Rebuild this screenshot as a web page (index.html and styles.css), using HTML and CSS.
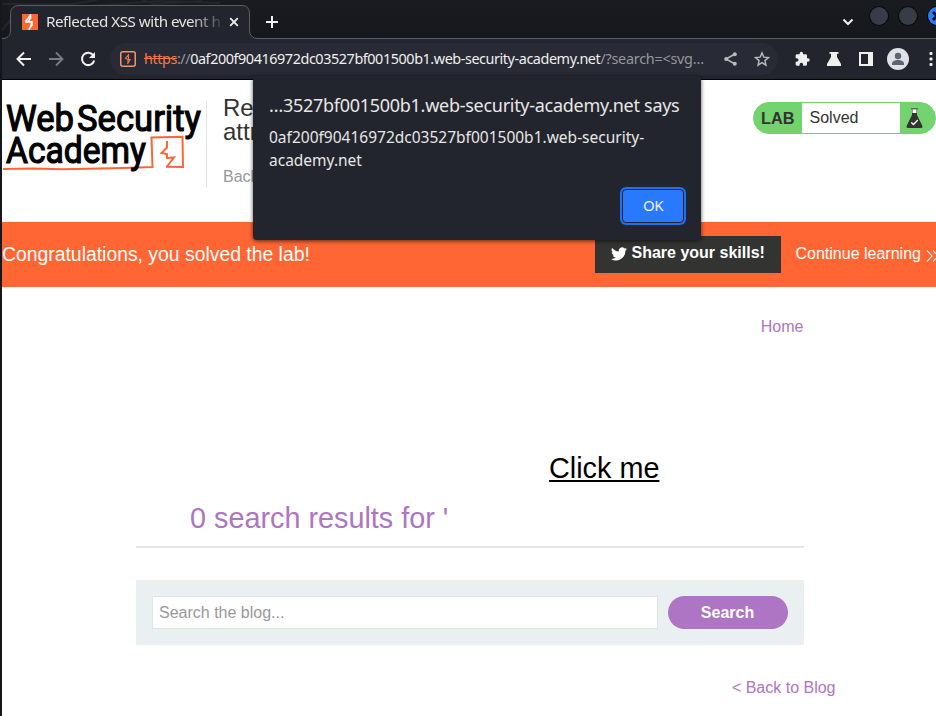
FILE: index.html
```html
<!DOCTYPE html>
<html lang="en">
<head>
<meta charset="utf-8">
<title>Reflected XSS with event handlers and href attributes blocked</title>
<link rel="stylesheet" href="styles.css">
</head>
<body>
<div class="window">
  <div class="tabstrip">
    <svg class="wallpaper" width="300" height="39" viewBox="0 0 300 39"><path d="M0 4h70L95 0M0 30l12-14M88 6l70-5 60 2M140 0l12 4 48-3" fill="none" stroke="#24262c" stroke-width="2"/></svg>
    <div class="tab">
      <svg class="tab-edge" width="258" height="34" viewBox="0 0 258 34"><path d="M0 34C5 34 8.500 31 8.500 26V9Q8.500 .5 17 .5H240Q247.500 .5 247.500 9V25Q247.500 33.500 256 33.500h2V34z" fill="#23252e"/><path d="M0 33.500C5 33.500 8.500 31 8.500 26V9Q8.500 .5 17 .5H240Q247.500 .5 247.500 9V25Q247.500 33.500 256 33.500h2" fill="none" stroke="#5b5d63"/></svg>
      <svg class="favicon" width="16" height="16" viewBox="0 0 16 16"><rect width="16" height="16" fill="#ff6633"/><path d="M8.500 0v4L6 8h3.500v2L7 16M8.500 1L4 7v1h5M10 7v4l-3 4" fill="none" stroke="#fff" stroke-width="1.600"/></svg>
      <span class="tab-title">Reflected XSS with event h</span>
      <svg class="tab-close" width="10" height="10" viewBox="0 0 10 10"><path d="M1.200 1.200l7.600 7.600M8.800 1.200L1.200 8.800" stroke="#f1f1ef" stroke-width="1.800"/></svg>
    </div>
    <svg class="new-tab" width="12" height="12" viewBox="0 0 12 12"><path d="M6 0v12M0 6h12" stroke="#f1f1ef" stroke-width="2"/></svg>
    <div class="window-controls">
      <svg class="chevron" width="12" height="8" viewBox="0 0 12 8"><path d="M1.500 1.500L6 6l4.500-4.500" fill="none" stroke="#f1f1ef" stroke-width="2"/></svg>
      <i class="dot"></i><i class="dot"></i>
      <i class="dot dot-close"><svg width="18" height="18" viewBox="0 0 18 18"><path d="M5 5l8 8M13 5l-8 8" stroke="#111" stroke-width="3"/></svg></i>
    </div>
  </div>
  <div class="toolbar">
    <svg class="nav" width="16" height="16" viewBox="0 0 16 16"><path d="M15 8H2M8 1.500L1.500 8 8 14.500" fill="none" stroke="#f1f1ef" stroke-width="2"/></svg>
    <svg class="nav" width="16" height="16" viewBox="0 0 16 16"><path d="M1 8h13M8 1.500L14.500 8 8 14.500" fill="none" stroke="#7b7c80" stroke-width="1.800"/></svg>
    <svg class="nav" width="16" height="16" viewBox="0 0 16 16"><path d="M13.400 4.500A6.200 6.200 0 1 0 14.200 9.500" fill="none" stroke="#f1f1ef" stroke-width="2"/><path d="M15 1v6H9z" fill="#f1f1ef"/></svg>
    <div class="omnibox">
      <svg class="site-icon" width="16" height="16" viewBox="0 0 16 16"><rect x=".75" y=".75" width="14.500" height="14.500" rx="2" fill="none" stroke="#f49468" stroke-width="1.500"/><path d="M9 3L5.500 7.500 8 8.500H10L7.500 13M8.500 4v4M8 8v4" fill="none" stroke="#f4774b" stroke-width="1.200"/></svg>
      <span class="url"><span class="url-scheme">https</span><span class="url-dim">://</span><span class="url-host">0af200f90416972dc03527bf001500b1.web-security-academy.net</span><span class="url-dim url-path">/?search=&lt;svg…</span></span>
      <svg class="share" width="13" height="14" viewBox="0 0 13 14"><path d="M11 2L2 7l9 5" fill="none" stroke="#b9babb" stroke-width="1.500"/><g fill="#b9babb"><circle cx="10.800" cy="2.200" r="2"/><circle cx="2.200" cy="7" r="2"/><circle cx="10.800" cy="11.800" r="2"/></g></svg>
      <svg class="star" width="16" height="16" viewBox="0 0 16 16"><path d="M8 1.800l1.800 4.300 4.700.4-3.600 3.100 1.100 4.600-4-2.500-4 2.500 1.100-4.600-3.600-3.100 4.700-.4z" fill="none" stroke="#b9babb" stroke-width="1.400"/></svg>
    </div>
    <svg class="ext" width="16" height="16" viewBox="0 0 24 24"><path d="M21 11h-1.500V7c0-1.100-.9-2-2-2h-4V3.500a2.500 2.500 0 0 0-5 0V5h-4c-1.100 0-2 .9-2 2v3.800H4a2.700 2.700 0 0 1 0 5.400H2.500V20c0 1.100.9 2 2 2h3.800v-1.500a2.700 2.700 0 0 1 5.400 0V22h3.800c1.100 0 2-.9 2-2v-4H21a2.500 2.500 0 0 0 0-5z" fill="#efefed"/></svg>
    <svg class="flask" width="16" height="14" viewBox="0 0 16 14"><path d="M3.500 0h9v1.700H11V5l4 7v2H1v-2l4-7V1.700H3.500z" fill="#efefed"/></svg>
    <svg class="panel" width="14" height="14" viewBox="0 0 14 14"><path d="M0 0h14v14H0zM2 2v10h7V2z" fill="#efefed" fill-rule="evenodd"/></svg>
    <svg class="avatar" width="22" height="22" viewBox="0 0 22 22"><circle cx="11" cy="11" r="11" fill="#dee1e6"/><circle cx="11" cy="8" r="3.200" fill="#5b6377"/><path d="M5 17v-1.500c0-2 3-3.500 6-3.500s6 1.500 6 3.500V17z" fill="#5b6377"/></svg>
    <svg class="kebab" width="4" height="14" viewBox="0 0 4 14"><g fill="#efefed"><rect x=".5" width="3" height="3" rx="1"/><rect x=".5" y="5.500" width="3" height="3" rx="1"/><rect x=".5" y="11" width="3" height="3" rx="1"/></g></svg>
  </div>

  <div class="page">
    <header class="lab-header">
      <svg class="logo" width="204" height="84" viewBox="0 0 204 84">
        <path d="M1 75l30-.5 30 .8 60-1.200 29.500-1.100L149.500 43.500l31-.8.5 30.300-17-.3" fill="none" stroke="#ff6633" stroke-width="2"/>
        <path d="M165 47v6.500l-5.500 5.500 5.500 1v4l7-.5-7 9" fill="none" stroke="#ff6633" stroke-width="2"/>
        <g class="logo-text"><text x="4" y="36.500" textLength="68" lengthAdjust="spacingAndGlyphs">Web</text><text x="75" y="36.500" textLength="124" lengthAdjust="spacingAndGlyphs">Security</text><text x="4" y="69" textLength="140" lengthAdjust="spacingAndGlyphs">Academy</text></g>
      </svg>
      <div class="lab-title">
        <h2>Reflected XSS with event handlers and href<br>attributes blocked</h2>
        <a class="lab-back">Back to lab description</a>
      </div>
      <div class="lab-status">
        <b>LAB</b><span>Solved</span>
        <svg width="17" height="20" viewBox="0 0 17 20"><path d="M6 1h5v6l5.200 10.500Q17 20 15 20H2Q0 20 .8 17.500L6 7z" fill="#333332"/><path d="M6.500 1h4v4h-4z" fill="#fff"/><path d="M5 .7h7" stroke="#666" stroke-width="1.400"/><path d="M5.300 14.500l2.200 2 4.300-4.500" fill="none" stroke="#fff" stroke-width="1.400"/></svg>
      </div>
    </header>
    <section class="banner">
      <p>Congratulations, you solved the lab!</p>
      <a class="share-skills"><svg width="16" height="14" viewBox="0 0 24 20"><path d="M24 2.400c-.9.400-1.800.7-2.800.8A5 5 0 0 0 23.300.5c-1 .6-2 1-3.100 1.200a4.900 4.900 0 0 0-8.400 4.500C7.700 6 4.100 4 1.700 1a4.900 4.900 0 0 0 1.500 6.600c-.8 0-1.500-.2-2.200-.6 0 2.300 1.500 4.400 3.900 4.900-.7.200-1.500.2-2.200.1.600 2 2.400 3.400 4.600 3.400A9.900 9.900 0 0 1 0 17.400 14 14 0 0 0 21.500 5c1-.7 1.800-1.600 2.500-2.600z" fill="#fff"/></svg><span>Share your skills!</span></a>
      <a class="continue"><span>Continue learning</span><svg width="14" height="12" viewBox="0 0 14 12"><path d="M1 .5L6 6l-5 5.500M7 .5L12 6l-5 5.500" fill="none" stroke="#fff" stroke-width="1.100"/></svg></a>
    </section>
    <main class="content">
      <nav><a>Home</a></nav>
      <div class="click"><a>Click me</a></div>
      <h1>0 search results for '</h1>
      <form class="search"><input type="text" placeholder="Search the blog..."><button type="button">Search</button></form>
      <div class="back"><a>&lt; Back to Blog</a></div>
    </main>
  </div>

  <div class="dialog">
    <div class="dialog-title">…3527bf001500b1.web-security-academy.net says</div>
    <p>0af200f90416972dc03527bf001500b1.web-security-<br>academy.net</p>
    <button type="button">OK</button>
  </div>
</div>
</body>
</html>
```

FILE: styles.css
```css
* { box-sizing: border-box; }
body { margin: 0; background: #16171c; overflow: hidden; }
svg { display: block; flex: none; }
.window { position: relative; width: 936px; height: 716px; padding-left: 2px; overflow: hidden; display: flex; flex-direction: column; font-family: "Noto Sans", sans-serif; }

.tabstrip { position: relative; flex: none; height: 39px; display: flex; align-items: flex-end; background: linear-gradient(#1a1b20, #17181d); border-bottom: 1px solid #5b5d63; }
.wallpaper { position: absolute; left: 0; top: 0; }
.tab { position: relative; width: 256px; height: 34px; margin-bottom: -1px; display: flex; align-items: center; padding-left: 20px; }
.tab-edge { position: absolute; left: 0; top: 0; }
.favicon, .tab-title, .tab-close { position: relative; }
.tab-title { flex: none; margin: -2px 0 0 8px; width: 180px; font-size: 15.2px; line-height: 22px; letter-spacing: -.5px; white-space: nowrap; overflow: hidden; color: #e4e3e0; -webkit-mask-image: linear-gradient(90deg, #000 145px, transparent 180px); mask-image: linear-gradient(90deg, #000 145px, transparent 180px); }
.tab-close { margin-left: 3px; }
.new-tab { margin: 0 0 10px 8px; }
.window-controls { margin-left: auto; margin-right: -10px; height: 38px; display: flex; align-items: flex-start; padding-top: 7px; }
.chevron { margin: 11px 16px 0 0; }
.dot { width: 18px; height: 18px; margin-right: 11px; border-radius: 50%; background: #373c49; box-shadow: 0 0 0 1px #08090c; }
.dot-close { background: #277fff; margin-right: 0; }

.toolbar { flex: none; height: 41px; display: flex; align-items: center; padding-left: 14px; background: #23252e; border-bottom: 1px solid #050609; }
.nav { margin-right: 16px; }
.omnibox { width: 668px; height: 32px; margin-left: -2px; padding-left: 10px; border-radius: 16px; background: #282a35; display: flex; align-items: center; }
.url { flex: none; width: 562px; margin-left: 8px; font-size: 14.4px; line-height: 20px; letter-spacing: -.43px; white-space: nowrap; color: #f1f0ed; }
.url-scheme { color: #f4774b; text-decoration: line-through; }
.url-dim { color: #96979b; }
.url-path { letter-spacing: -.25px; }
.share { margin-left: 18px; }
.star { margin-left: 17px; }
.ext { margin-left: 16px; }
.flask { margin-left: 16px; }
.panel { margin-left: 17px; }
.avatar { margin-left: 14px; }
.kebab { margin-left: 20px; }

.page { flex: 1; background: #fff; color: #333332; font-family: "Liberation Sans", sans-serif; font-size: 16px; display: flex; flex-direction: column; }
.lab-header { flex: none; height: 142px; display: flex; align-items: flex-start; }
.logo { margin-top: 14px; }
.logo-text { font-family: Roboto, sans-serif; font-size: 37.5px; font-weight: 400; fill: #000; stroke: #000; stroke-width: 1.2px; }
.lab-title { width: 500px; height: 87px; margin: 21px 0 0 0; padding-left: 16px; border-left: 1px solid #e5e5e5; white-space: nowrap; }
.lab-title h2 { margin: -5px 0 0; font-size: 24px; line-height: 24px; font-weight: 400; }
.lab-back { display: block; margin-top: 24px; line-height: 18px; color: #999; }
.lab-status { flex: none; width: 183px; height: 32px; margin: 22px 0 0 47px; border: 1px solid #72d36f; border-radius: 16px; background: #72d36f; display: flex; align-items: center; overflow: hidden; }
.lab-status b { width: 48px; padding-left: 7px; font-size: 16.3px; line-height: 30px; }
.lab-status span { width: 98px; padding-left: 7.5px; line-height: 30px; background: #fff; }
.lab-status svg { margin: 0 0 0 6px; }

.banner { flex: none; height: 65px; display: flex; align-items: center; background: #ff6633; color: #fff; white-space: nowrap; }
.banner p { flex: none; width: 593px; margin: -2px 0 0; font-size: 19.36px; line-height: 24px; }
.share-skills { flex: none; width: 186px; height: 37px; margin-top: -1px; padding-left: 16px; display: flex; align-items: center; gap: 4.5px; background: #333332; font-weight: 700; line-height: 18px; }
.share-skills span { margin-top: -2px; }
.continue { flex: none; margin: -1px 0 0 14.5px; display: flex; align-items: center; gap: 5px; }
.continue svg { margin-top: 3px; }

.content { width: 668px; margin-left: 134px; color: #ad75c3; }
.content nav { margin: 31px .5px 0 0; line-height: 18px; text-align: right; }
.click { margin-top: 114px; padding-left: 413px; font-size: 28.8px; line-height: 36px; color: #000; }
.click a { text-decoration: underline; }
.content h1 { margin: 0; height: 62px; padding: 16px 0 0 54px; border-bottom: 2px solid #e5e5e5; font-size: 28.8px; line-height: 32px; font-weight: 400; }
.search { display: flex; gap: 10px; margin-top: 32px; padding: 16px; height: 65px; background: #eaf0f2; }
.search input { width: 506px; height: 33px; padding: 0 6px; border: 1px solid #e0e4e5; font: 16px "Liberation Sans", sans-serif; }
.search input::placeholder { color: #999; opacity: 1; }
.search button { width: 120px; height: 33px; padding: 0 1px 0 0; border: 0; border-radius: 17px; background: #ad75c3; color: #fff; font: 700 16px "Liberation Sans", sans-serif; }
.back { margin: 34px -31.5px 0 0; text-align: right; line-height: 18px; }

.dialog { position: absolute; left: 253px; top: 76px; width: 448px; height: 164px; padding: 16px; border-radius: 4px; background: #23252e; box-shadow: 0 1px 4px rgba(0,0,0,.65); color: #e8e7e4; white-space: nowrap; display: flex; flex-direction: column; }
.dialog-title { font-size: 18px; line-height: 26px; letter-spacing: -.28px; }
.dialog p { margin: 8px 0 0; font-size: 15.5px; line-height: 23px; }
.dialog button { width: 62px; height: 34px; margin: 16.5px 1px 0 auto; padding: 0 0 2px; border: 1px solid #23252e; border-radius: 4px; background: #2979ff; box-shadow: 0 0 0 2px #1a73e8; color: #f1f0ed; font: 15px "Noto Sans", sans-serif; letter-spacing: -.6px; }
```
